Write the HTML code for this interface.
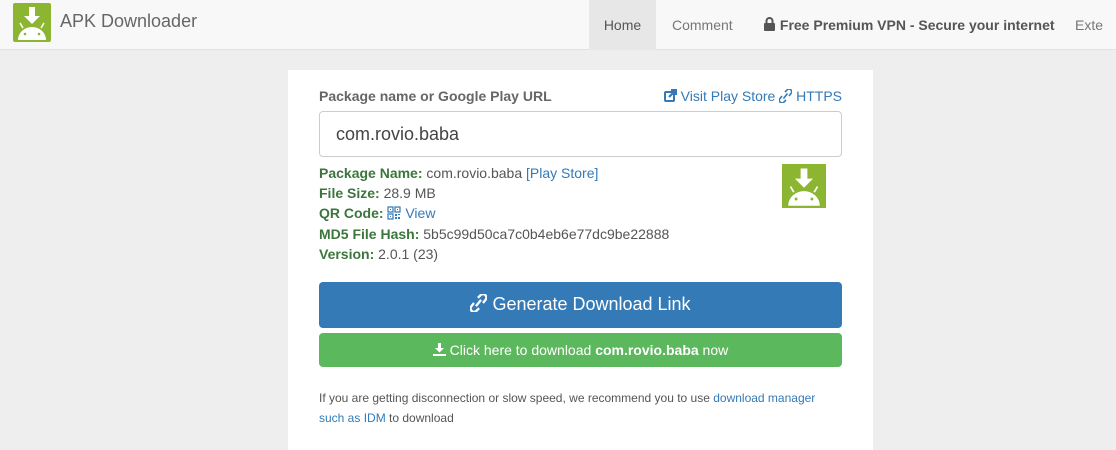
<!DOCTYPE html>
<html><head><meta charset="utf-8"><style>
*{box-sizing:border-box;margin:0;padding:0}
body{width:1116px;height:438px;overflow:hidden;background:#eeeeee;font-family:"Liberation Sans",Arial,sans-serif;font-size:14px;color:#333;position:relative}
.nav{position:absolute;left:0;top:0;width:1116px;height:50px;background:#f8f8f8;border-bottom:1px solid #e2e2e2}
.logo{position:absolute;left:13px;top:3px;width:38px;height:39px;background:#8cb532;border-radius:2px}
.brand{position:absolute;left:60px;top:11px;font-size:18px;color:#666}
.nl{position:absolute;top:0;height:50px;line-height:50px;font-size:14px;color:#777}
.card{position:absolute;left:288px;top:70px;width:585px;height:380px;background:#fff}
.lbl{position:absolute;left:31px;top:18px;font-weight:bold;color:#666;font-size:14px}
.links{position:absolute;right:31px;top:18px;color:#337ab7;font-size:14px}
.inp{position:absolute;left:31px;top:41px;width:523px;height:46px;border:1px solid #ccc;border-radius:4px;font-size:18px;line-height:44px;padding-left:16px;color:#444}
.info{position:absolute;left:31px;top:93px;line-height:20.2px;font-size:14px;color:#555}
.info b{color:#3c763d}
.info a{color:#337ab7}
.btn1{position:absolute;left:31px;top:212px;width:523px;height:46px;background:#337ab7;border-radius:4px;color:#fff;font-size:18px;text-align:center;line-height:44px}
.btn2{position:absolute;left:31px;top:263px;width:523px;height:34px;background:#5cb85c;border-radius:4px;color:#fff;font-size:14px;text-align:center;line-height:34px}
.note{position:absolute;left:31px;top:318px;font-size:12px;line-height:20px;color:#555;width:523px}
.note a{color:#337ab7}
svg{vertical-align:middle}
</style></head><body>
<div class="nav">
 <div class="logo"><svg width="38" height="39" viewBox="0 0 38 39"><path d="M16 4h6v9h5l-8 8-8-8h5z" fill="#fff"/><path d="M5 37a14 13 0 0 1 28 0z" fill="#fff"/><path d="M7 20l3 5M31 20l-3 5" stroke="#fff" stroke-width="1.5"/><circle cx="12" cy="31" r="1.3" fill="#8cb532"/><circle cx="26" cy="31" r="1.3" fill="#8cb532"/></svg></div>
 <div class="brand">APK Downloader</div>
 <div class="nl" style="left:589px;width:67px;background:#e7e7e7;color:#555;text-align:center">Home</div>
 <div class="nl" style="left:672px">Comment</div>
 <div class="nl" style="left:763px;font-weight:bold;color:#555"><svg width="13" height="14" viewBox="0 0 13 14" style="margin-top:-4px"><path d="M3.5 6V4a3 3 0 0 1 6 0v2" stroke="#555" stroke-width="2" fill="none"/><rect x="1" y="6" width="11" height="8" rx="1" fill="#555"/></svg> Free Premium VPN - Secure your internet</div>
 <div class="nl" style="left:1075px">Exte</div>
</div>
<div class="card">
 <div class="lbl">Package name or Google Play URL</div>
 <div class="links"><svg width="14" height="14" viewBox="0 0 14 14" style="margin-top:-3px"><rect x="1" y="2" width="11" height="11" rx="2" fill="#337ab7"/><rect x="3" y="4" width="7" height="7" fill="#fff"/><path d="M6 8l6-6M8 1h5v5" stroke="#337ab7" stroke-width="2.2" fill="none"/></svg> Visit Play Store <svg width="13" height="14" viewBox="0 0 13 14" style="margin-top:-3px"><path d="M6 3l2-2a2.5 2.5 0 0 1 4 3.5l-2 2.5M7 11l-2 2a2.5 2.5 0 0 1-4-3.5l2-2.5M4.5 9.5l4-5" stroke="#337ab7" stroke-width="1.6" fill="none"/></svg> HTTPS</div>
 <div class="inp">com.rovio.baba</div>
 <div class="info"><b>Package Name:</b> com.rovio.baba <a>[Play Store]</a><br><b>File Size:</b> 28.9 MB<br><b>QR Code:</b> <a><svg width="14" height="14" viewBox="0 0 14 14" style="margin-top:-3px"><path d="M1 1h5v5H1zM8 1h5v5H8zM1 8h5v5H1z" stroke="#337ab7" stroke-width="1.2" fill="none"/><path d="M3 3h1v1H3zM10 3h1v1h-1zM3 10h1v1H3zM8 8h2v2H8zM11 11h2v2h-2zM11 8h2v1h-2zM8 11h2v2H8z" fill="#337ab7"/></svg> View</a><br><b>MD5 File Hash:</b> 5b5c99d50ca7c0b4eb6e77dc9be22888<br><b>Version:</b> 2.0.1 (23)</div>
 <div style="position:absolute;left:494px;top:94px;width:44px;height:44px;background:#8cb532"><svg width="44" height="44" viewBox="0 0 38 39"><path d="M16 4h6v9h5l-8 8-8-8h5z" fill="#fff"/><path d="M5 37a14 13 0 0 1 28 0z" fill="#fff"/><path d="M7 20l3 5M31 20l-3 5" stroke="#fff" stroke-width="1.5"/><circle cx="12" cy="31" r="1.3" fill="#8cb532"/><circle cx="26" cy="31" r="1.3" fill="#8cb532"/></svg></div>
 <div class="btn1"><svg width="17" height="18" viewBox="0 0 13 14" style="margin-top:-5px"><path d="M6 3l2-2a2.5 2.5 0 0 1 4 3.5l-2 2.5M7 11l-2 2a2.5 2.5 0 0 1-4-3.5l2-2.5M4.5 9.5l4-5" stroke="#fff" stroke-width="1.8" fill="none"/></svg> Generate Download Link</div>
 <div class="btn2"><svg width="13" height="13" viewBox="0 0 13 13" style="margin-top:-4px"><path d="M5 0h3v5h3l-4.5 4.5L2 5h3z" fill="#fff"/><rect x="0" y="11" width="13" height="2" fill="#fff"/></svg> Click here to download <b>com.rovio.baba</b> now</div>
 <div class="note">If you are getting disconnection or slow speed, we recommend you to use <a>download manager<br>such as IDM</a> to download</div>
</div>
</body></html>
